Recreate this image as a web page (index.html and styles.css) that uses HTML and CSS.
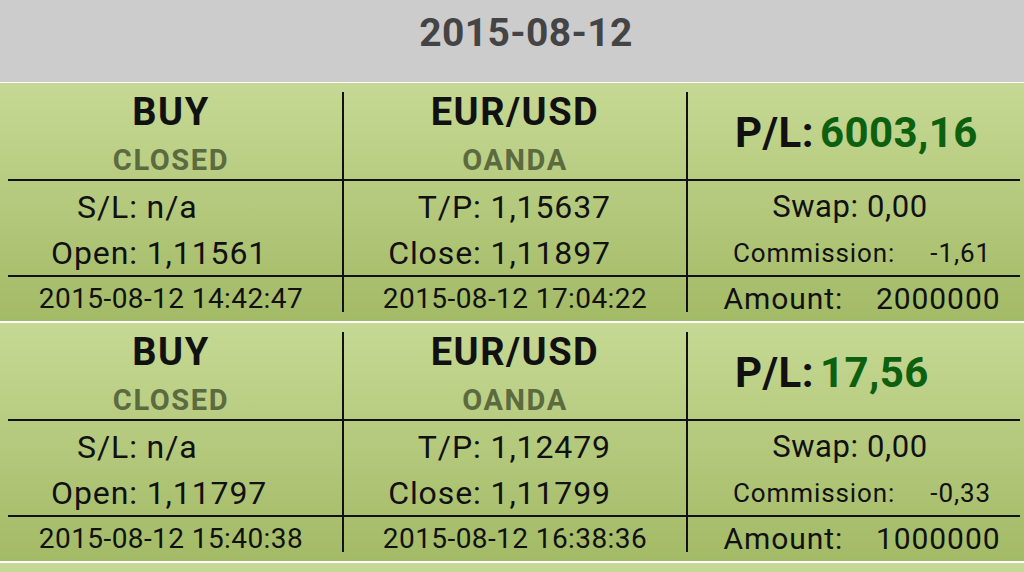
FILE: index.html
```html
<!DOCTYPE html>
<html lang="en">
<head>
<meta charset="utf-8">
<title>Trades 2015-08-12</title>
<link rel="stylesheet" href="styles.css">
</head>
<body>
<header class="day">2015-08-12</header>
<main class="list">
  <section class="trade">
    <div class="cell c1 r1"><div class="side">BUY</div><div class="state">CLOSED</div></div>
    <div class="cell c2 r1"><div class="side">EUR/USD</div><div class="state">OANDA</div></div>
    <div class="cell c3 r1 pl"><span>P/L:</span><span class="pl-value">6003,16</span></div>
    <div class="hline"></div>
    <div class="cell c1 r2"><div class="lv sl">S/L: n/a</div><div class="lv open">Open: 1,11561</div></div>
    <div class="cell c2 r2"><div class="lv">T/P: 1,15637</div><div class="lv">Close: 1,11897</div></div>
    <div class="cell c3 r2"><div class="lv swap">Swap: 0,00</div><div class="pair comm"><span>Commission:</span><span>-1,61</span></div></div>
    <div class="hline"></div>
    <div class="cell c1 r3 date">2015-08-12 14:42:47</div>
    <div class="cell c2 r3 date">2015-08-12 17:04:22</div>
    <div class="cell c3 r3"><div class="pair amount"><span>Amount:</span><span>2000000</span></div></div>
  </section>
  <section class="trade">
    <div class="cell c1 r1"><div class="side">BUY</div><div class="state">CLOSED</div></div>
    <div class="cell c2 r1"><div class="side">EUR/USD</div><div class="state">OANDA</div></div>
    <div class="cell c3 r1 pl"><span>P/L:</span><span class="pl-value">17,56</span></div>
    <div class="hline"></div>
    <div class="cell c1 r2"><div class="lv sl">S/L: n/a</div><div class="lv open">Open: 1,11797</div></div>
    <div class="cell c2 r2"><div class="lv">T/P: 1,12479</div><div class="lv">Close: 1,11799</div></div>
    <div class="cell c3 r2"><div class="lv swap">Swap: 0,00</div><div class="pair comm"><span>Commission:</span><span>-0,33</span></div></div>
    <div class="hline"></div>
    <div class="cell c1 r3 date">2015-08-12 15:40:38</div>
    <div class="cell c2 r3 date">2015-08-12 16:38:36</div>
    <div class="cell c3 r3"><div class="pair amount"><span>Amount:</span><span>1000000</span></div></div>
  </section>
  <div class="trade-peek"></div>
</main>
</body>
</html>
```
FILE: styles.css
```css
* { box-sizing: border-box; margin: 0; padding: 0; }
html, body { height: 100%; overflow: hidden; }
body {
  background: #ffffff;
  font-family: Roboto, "Noto Sans", "Liberation Sans", sans-serif;
  color: #111;
}
.day {
  height: 82px;
  margin-bottom: 1px;
  background: #cccccc;
  color: #444444;
  font-size: 39px;
  font-weight: 700;
  letter-spacing: 0.01em;
  display: flex;
  align-items: center;
  justify-content: center;
  padding: 0 0 16px 28px;
}
.trade {
  display: grid;
  grid-template-columns: 342px 344px 1fr;
  grid-template-rows: 96px 2px 94px 2px 44px;
  background: linear-gradient(#c6d994, #a3ba66);
  margin-bottom: 2px;
}
.trade-peek {
  height: 9px;
  background: #c6d994;
}
.hline {
  grid-column: 1 / -1;
  background: #111;
  margin: 0 4px 0 8px;
}
.cell { white-space: nowrap; }
.c2, .c3 { padding-left: 2px; }
.c2.r1, .c3.r1 {
  background: linear-gradient(#111, #111) left bottom / 2px calc(100% - 9px) no-repeat;
}
.c2.r2, .c3.r2 {
  background: linear-gradient(#111, #111) left top / 2px 100% no-repeat;
}
.c2.r3, .c3.r3 {
  background: linear-gradient(#111, #111) left top / 2px calc(100% - 9px) no-repeat;
}
.r1 { text-align: center; padding-top: 7px; }
.side { font-size: 38px; font-weight: 700; line-height: 44px; letter-spacing: 0.04em; }
.state { font-size: 29px; font-weight: 700; line-height: 52px; color: #5b6a3f; letter-spacing: 0.055em; }
.c3.pl {
  display: flex;
  align-items: center;
  justify-content: flex-start;
  gap: 6px;
  padding: 3px 0 0 49px;
  font-size: 42px;
  font-weight: 700;
  letter-spacing: 0.01em;
}
.pl-value { color: #0c600f; }
.r2 { padding-top: 3px; }
.lv { font-size: 32px; line-height: 46px; letter-spacing: 0.028em; }
.sl { padding-left: 77px; }
.open { padding-left: 51px; }
.c2.r2 { text-align: right; padding-right: 75px; }
.swap { font-size: 31px; text-align: center; padding-right: 12px; letter-spacing: 0.02em; }
.pair {
  display: flex;
  justify-content: center;
  padding-left: 12px;
}
.comm { gap: 35px; font-size: 26px; line-height: 46px; letter-spacing: 0.035em; }
.amount { gap: 33px; font-size: 30px; line-height: 44px; letter-spacing: 0.03em; }
.date { font-size: 28px; line-height: 44px; text-align: center; letter-spacing: 0.015em; }
```
